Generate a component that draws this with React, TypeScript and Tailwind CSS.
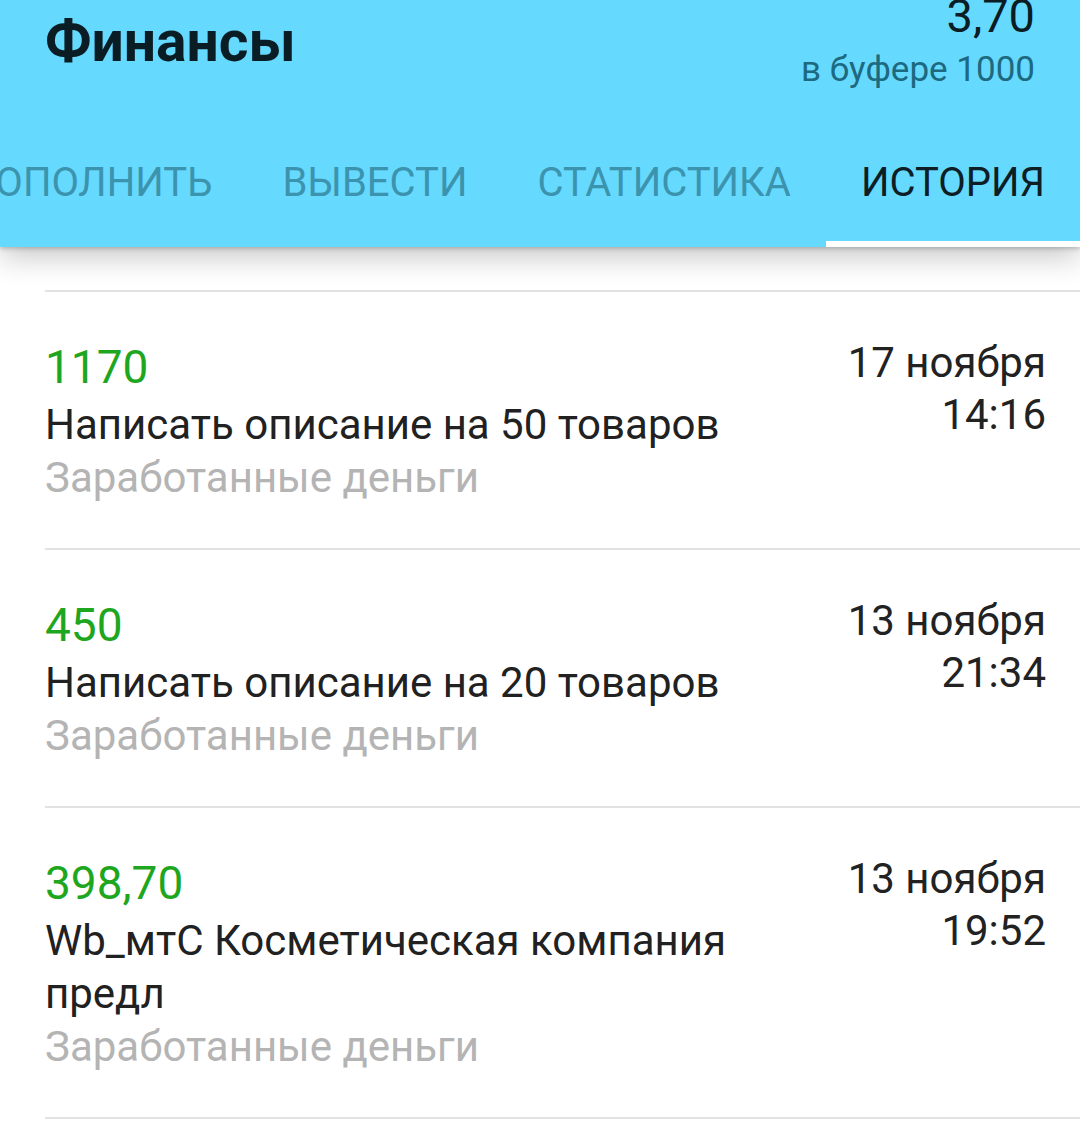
import React from "react";

type Entry = {
  amount: string;
  title: string;
  kind: string;
  date: string;
  time: string;
};

const entries: Entry[] = [
  { amount: "1170", title: "Написать описание на 50 товаров", kind: "Заработанные деньги", date: "17 ноября", time: "14:16" },
  { amount: "450", title: "Написать описание на 20 товаров", kind: "Заработанные деньги", date: "13 ноября", time: "21:34" },
  { amount: "398,70", title: "Wb_мтС Косметическая компания предл", kind: "Заработанные деньги", date: "13 ноября", time: "19:52" },
];

const tabs = ["Пополнить", "Вывести", "Статистика", "История"];

export default function App() {
  return (
    <div
      className="w-[1080px] h-[1148px] overflow-hidden bg-white"
      style={{ fontFamily: "Roboto, 'Noto Sans', sans-serif" }}
    >
      {/* шапка */}
      <header className="relative z-10 h-[247px] bg-[#66d9ff] flex flex-col shadow-[0_2px_4px_rgba(0,0,0,0.18),0_10px_28px_rgba(0,0,0,0.22)]">
        <div className="flex justify-between pl-[45px] pr-[45px]">
          <h1 className="pt-[10px] text-[57px] leading-[64px] font-bold text-[#0b1d24]">Финансы</h1>
          <div className="-mt-[9px] flex flex-col items-end">
            <span className="text-[47px] leading-[50px] text-[#0b1d24]">3,70</span>
            <span className="text-[35px] leading-[58px] text-[#1d6a80]">в буфере 1000</span>
          </div>
        </div>

        {/* вкладки прокручены вправо, первая обрезана */}
        <nav className="mt-auto flex justify-end overflow-hidden whitespace-nowrap">
          {tabs.map((t, i) => {
            const active = i === tabs.length - 1;
            return (
              <div
                key={t}
                className={
                  "shrink-0 px-[35px] pb-[33px] text-[40px] leading-[50px] uppercase border-b-[6px] " +
                  (active ? "border-white text-[#0d1e25]" : "border-transparent text-[#3c93ad]")
                }
              >
                {t}
              </div>
            );
          })}
        </nav>
      </header>

      {/* история */}
      <div className="ml-[45px]">
        <div className="h-[45px] border-b-2 border-[#e2e2e2]" />
        {entries.map((e) => (
          <div key={e.amount} className="flex pt-[45px] pb-[44px] pr-[34px] border-b-2 border-[#e2e2e2]">
            <div className="flex-1 min-w-0 pr-[60px]">
              <div className="text-[46px] leading-[61px] text-[#1ea61e]">{e.amount}</div>
              <div className="text-[42px] leading-[53px] text-[#212121]">{e.title}</div>
              <div className="text-[42px] leading-[53px] text-[#b4b4b4]">{e.kind}</div>
            </div>
            <div className="shrink-0 flex flex-col items-end text-[42px] leading-[52px] text-[#222222]">
              <span>{e.date}</span>
              <span>{e.time}</span>
            </div>
          </div>
        ))}
      </div>
    </div>
  );
}
